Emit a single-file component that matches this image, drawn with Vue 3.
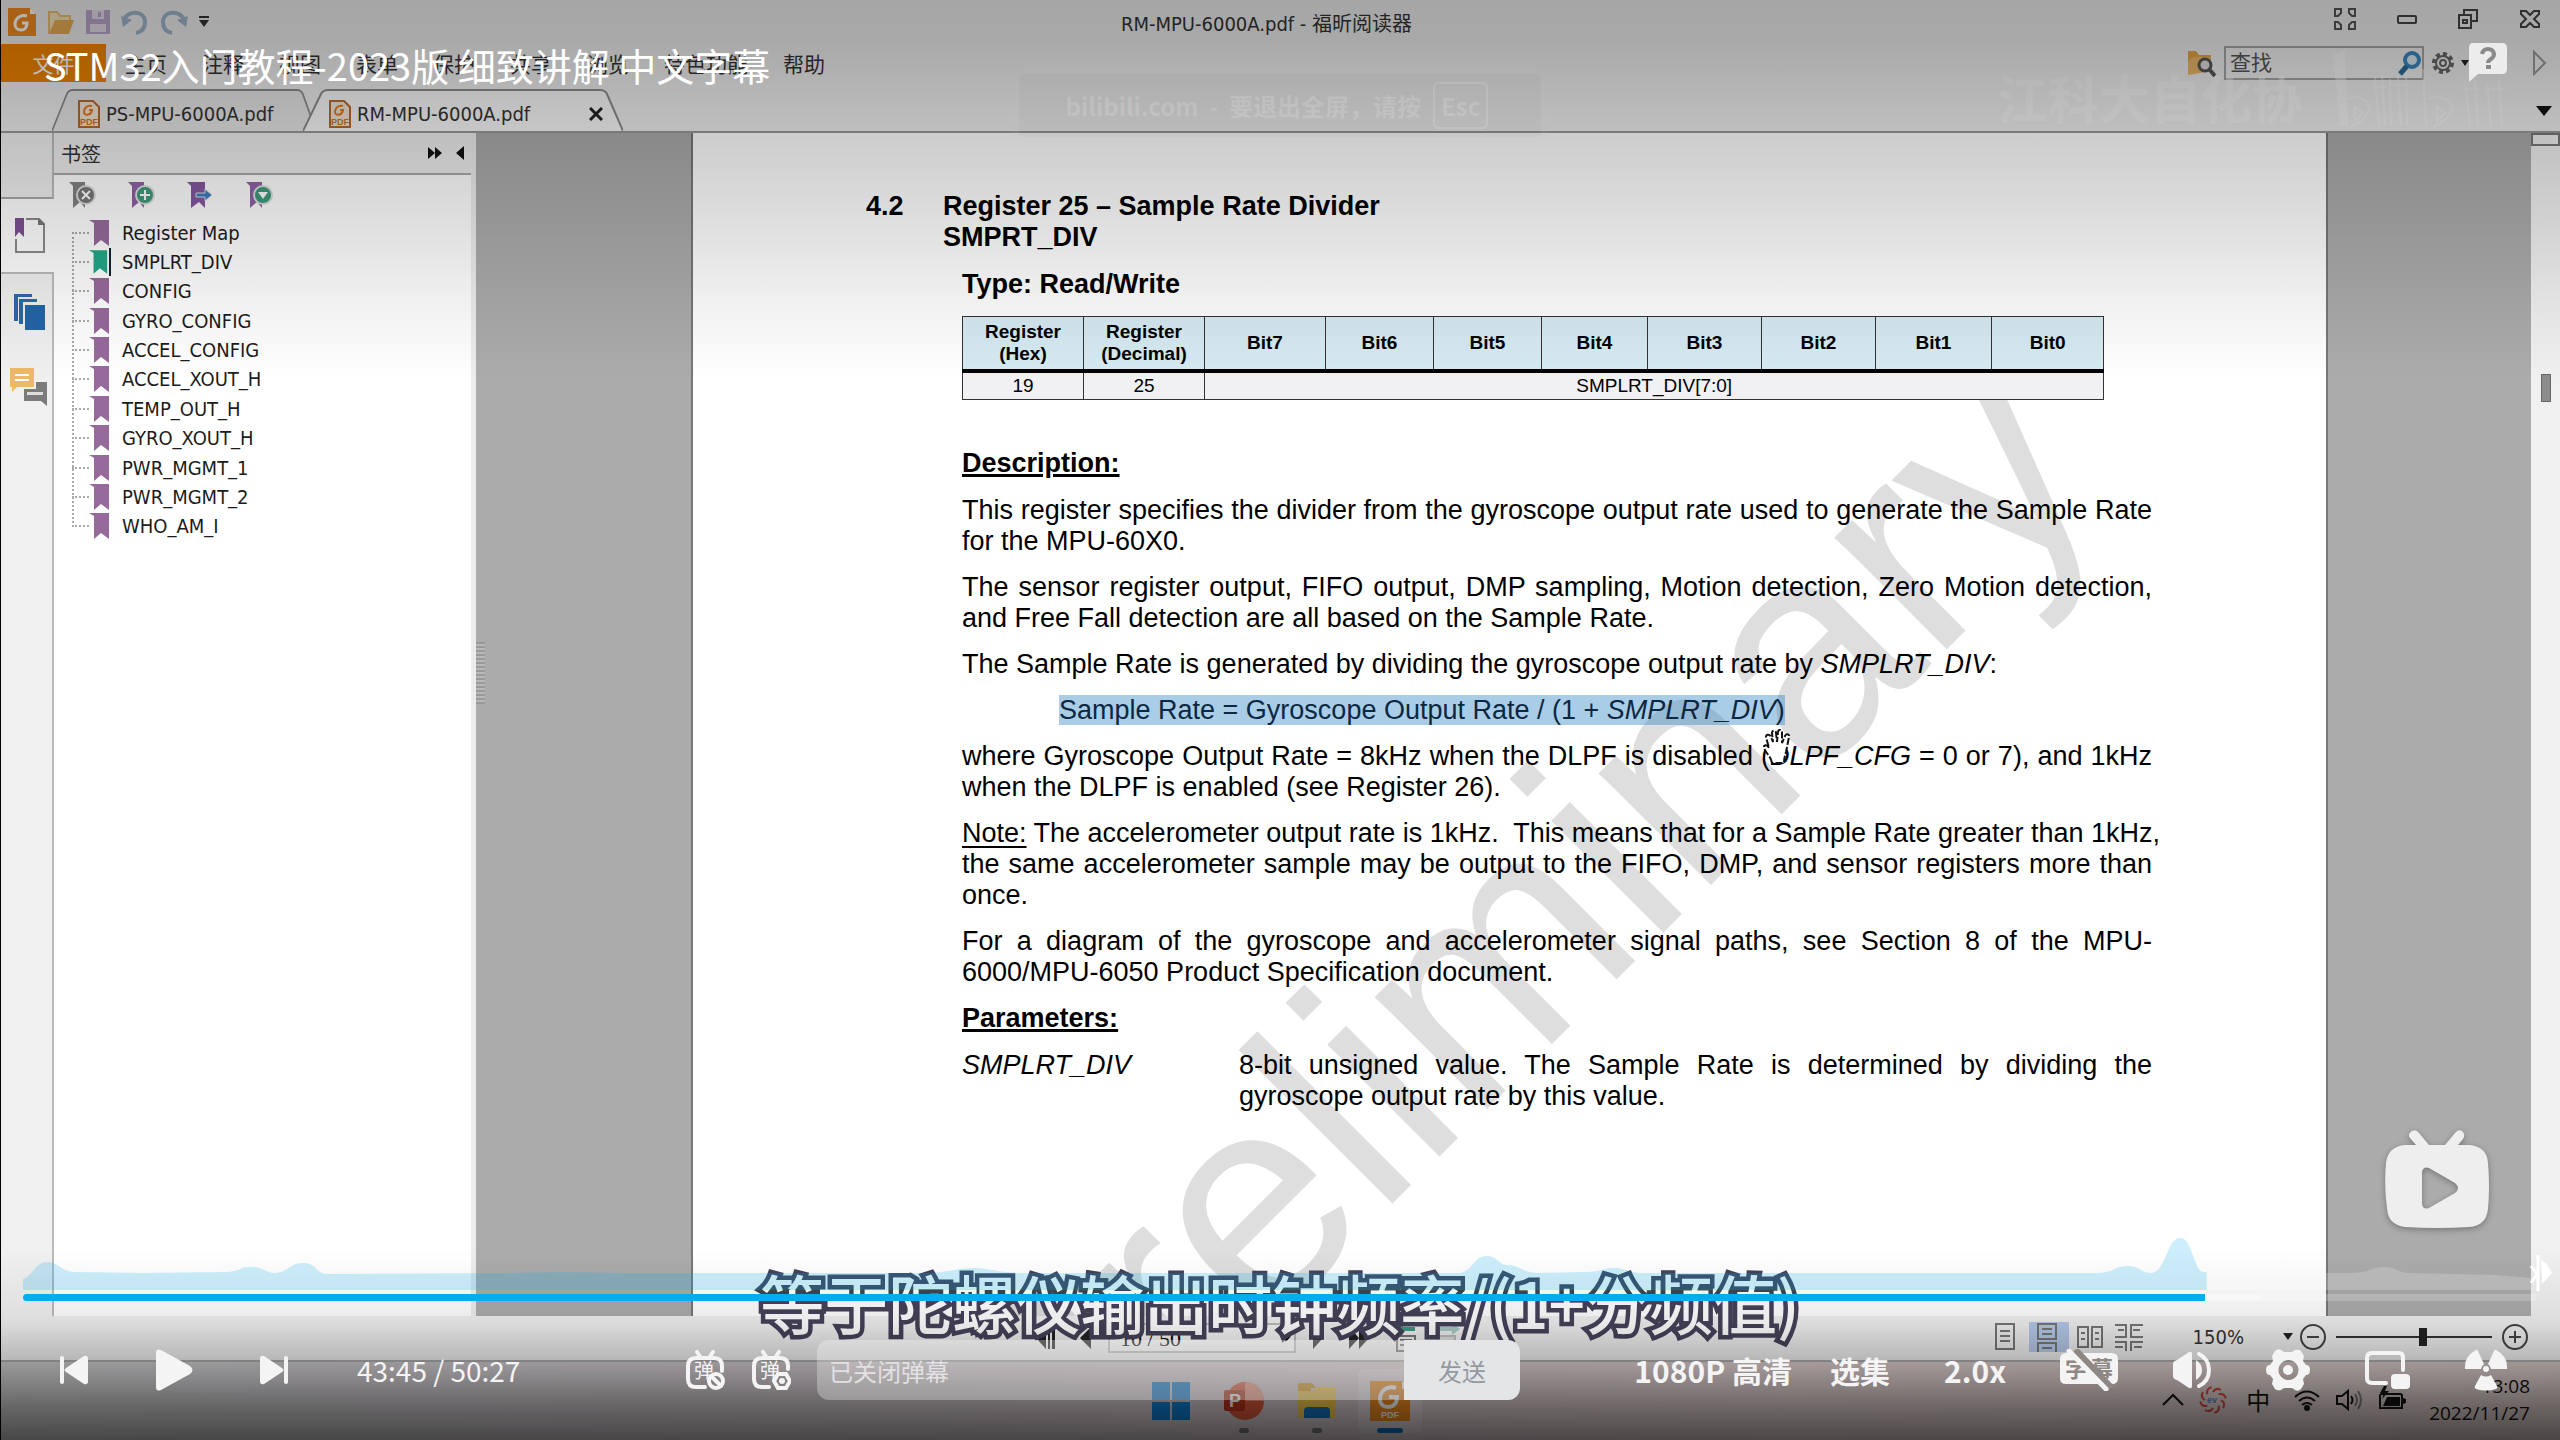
<script setup>
import { ref } from 'vue';

const menus = ['主页', '注释', '视图', '表单', '保护', '共享', '浏览', '特色功能', '帮助'];
const tabs = [
  { name: 'PS-MPU-6000A.pdf', active: false },
  { name: 'RM-MPU-6000A.pdf', active: true },
];
const bookmarks = [
  'Register Map', 'SMPLRT_DIV', 'CONFIG', 'GYRO_CONFIG', 'ACCEL_CONFIG', 'ACCEL_XOUT_H',
  'TEMP_OUT_H', 'GYRO_XOUT_H', 'PWR_MGMT_1', 'PWR_MGMT_2', 'WHO_AM_I',
];
const current = ref('SMPLRT_DIV');
const bits = ['Bit7', 'Bit6', 'Bit5', 'Bit4', 'Bit3', 'Bit2', 'Bit1', 'Bit0'];
const keyword = ref('');
const danmaku = ref('');
const zoom = ref(56);
const progress = ref(868);
</script>

<template>
  <div class="player">
    <!-- recorded desktop -->
    <div class="desktop">
      <header class="titlebar">
        <div class="quick">
          <svg width="28" height="28" viewBox="0 0 28 28"><path d="M0 0h22l6 6v22H0z" fill="#f08a20" /><path d="M22 0v6h6z" fill="#fff" /><path d="M19 8c-7-2-12 3-12 8 0 4 3 6 6 6 4 0 6-3 6-7h-5" fill="none" stroke="#fff" stroke-width="3" /></svg>
          <svg width="28" height="28" viewBox="0 0 28 28"><path d="M2 26V4h8l3 4h10v4" fill="#f6e3b8" stroke="#e9bd72" stroke-width="2" /><path d="M2 26L8 12h19l-5 14z" fill="#e6ad55" /></svg>
          <svg width="24" height="28" viewBox="0 0 24 28"><path d="M0 2h24v24H0z" fill="#b9a5c9" /><path d="M6 2h12v9H6zM4 16h16v8H4z" fill="#e3dce8" /><path d="M12 4h3v5h-3z" fill="#b9a5c9" /></svg>
          <svg width="28" height="28" viewBox="0 0 28 28"><path d="M3 12C6 2 24 2 24 14c0 6-3 10-9 11" fill="none" stroke="#9db4cc" stroke-width="4" /><path d="M0 8l2 11 9-7z" fill="#9db4cc" /></svg>
          <svg width="28" height="28" viewBox="0 0 28 28"><path d="M24 12C21 2 3 2 3 14c0 6 3 10 9 11" fill="none" stroke="#9db4cc" stroke-width="4" /><path d="M28 8l-2 11-9-7z" fill="#9db4cc" /></svg>
          <svg width="10" height="12" viewBox="0 0 10 12"><path d="M0 0h10v2H0zM0 4h10L5 11z" fill="#333" /></svg>
        </div>
        <h1>RM-MPU-6000A.pdf - 福昕阅读器</h1>
        <div class="window-buttons">
          <button aria-label="皮肤"><svg width="24" height="24" viewBox="0 0 24 24"><path d="M2 9V2h6v4l-3 3zM16 2h6v7h-3l-3-3zM2 15h3l3 3v4H2zM22 15v7h-6v-4l3-3z" fill="none" stroke="#555" stroke-width="2" /></svg></button>
          <button aria-label="最小化"><svg width="20" height="24" viewBox="0 0 20 24"><rect x="1" y="9" width="18" height="7" rx="1" fill="none" stroke="#444" stroke-width="2" /></svg></button>
          <button aria-label="还原"><svg width="22" height="24" viewBox="0 0 22 24"><path d="M7 8V3h13v11h-5M2 8h12v13H2zM6 13h4v3H6z" fill="none" stroke="#444" stroke-width="2" /></svg></button>
          <button aria-label="关闭"><svg width="22" height="24" viewBox="0 0 22 24"><path d="M2 4h5l4 4 4-4h5v3l-5 5 5 5v3h-5l-4-4-4 4H2v-3l5-5-5-5z" fill="none" stroke="#444" stroke-width="2" /></svg></button>
        </div>
      </header>

      <nav class="menubar">
        <button class="file">文件</button>
        <button v-for="m in menus" :key="m">{{ m }}</button>
        <div class="find">
          <svg width="30" height="28" viewBox="0 0 30 28"><path d="M1 26V2h8l3 4h12v5" fill="#e0a347" /><path d="M1 26V12l6-4h17v14z" fill="#e9b565" /><circle cx="18" cy="16" r="6" fill="#ddd" stroke="#555" stroke-width="3" /><path d="M22 20l6 7" stroke="#555" stroke-width="4" /></svg>
          <div class="find-box">
            <input v-model="keyword" type="text" placeholder="查找" aria-label="查找">
            <svg width="24" height="26" viewBox="0 0 24 26"><circle cx="14" cy="10" r="7" fill="#d6e8f3" stroke="#3b87bd" stroke-width="4" /><path d="M9 16l-7 8" stroke="#2b6a9c" stroke-width="5" /></svg>
          </div>
          <svg width="38" height="26" viewBox="0 0 38 26"><circle cx="12" cy="13" r="9" fill="none" stroke="#666" stroke-width="4" stroke-dasharray="4 3" /><circle cx="12" cy="13" r="7" fill="none" stroke="#666" stroke-width="2" /><circle cx="12" cy="13" r="3" fill="none" stroke="#666" stroke-width="2" /><path d="M30 10h8l-4 6z" fill="#222" /></svg>
          <svg class="next-arrow" width="16" height="26" viewBox="0 0 16 26"><path d="M2 2l11 11L2 24z" fill="none" stroke="#999" stroke-width="2" /></svg>
        </div>
      </nav>

      <div class="tabs">
        <button v-for="t in tabs" :key="t.name" class="tab" :class="{ active: t.active }">
          <svg class="tab-shape" viewBox="0 0 320 42" preserveAspectRatio="none"><path d="M0 42L18 5Q20 1 25 1H297Q302 1 304 5L320 42" stroke="#8c8c8c" stroke-width="2" /></svg>
          <svg width="22" height="28" viewBox="0 0 22 28"><path d="M1 1h14l6 6v20H1z" fill="#f3e4d4" stroke="#b56a2e" stroke-width="2" /><path d="M14 6c-6-1-8 3-8 6 0 4 7 4 8-2h-3" fill="none" stroke="#e07a20" stroke-width="2" /><text x="2" y="25" font-size="9" font-weight="bold" fill="#c8742c" font-family="Liberation Sans">PDF</text></svg>
          <span>{{ t.name }}</span>
          <svg v-if="t.active" class="tab-close" width="14" height="14" viewBox="0 0 14 14"><path d="M1 1l12 12M13 1L1 13" stroke="#222" stroke-width="3" /></svg>
        </button>
        <svg class="tab-more" width="16" height="10" viewBox="0 0 16 10"><path d="M0 0h16L8 10z" fill="#111" /></svg>
      </div>

      <div class="body">
        <aside class="strip">
          <div class="strip-head"></div>
          <button class="on" aria-label="书签">
            <svg width="32" height="38" viewBox="0 0 32 38"><path d="M12 2h13l5 5v28H2V22" fill="none" stroke="#8a8a8a" stroke-width="2" /><path d="M24 1v7h7z" fill="#777" /><path d="M1 1h9v19l-5-5-4 5z" fill="#7d4f94" /></svg>
          </button>
          <button aria-label="页面">
            <svg width="32" height="38" viewBox="0 0 32 38"><path d="M1 1h18v3H5v24H1zM6 6h18v3H10v22H6z" fill="#2a6aad" /><path d="M12 12h20v25H12z" fill="#2465a8" /></svg>
          </button>
          <button aria-label="注释">
            <svg width="40" height="40" viewBox="0 0 40 40"><path d="M1 1h24v19H8l-5 5v-5H1z" fill="#efb768" /><path d="M6 8h14M6 13h14" stroke="#fff" stroke-width="2" /><path d="M27 15h11v24l-6-5H15V22h12z" fill="#7b7b7b" /><path d="M18 25h16v3H18z" fill="#ddd" /></svg>
          </button>
        </aside>

        <section class="panel">
          <div class="panel-head">
            <h2>书签</h2>
            <svg width="40" height="16" viewBox="0 0 40 16"><path d="M1 2l7 6-7 6zM8 2l7 6-7 6zM37 1v14l-8-7z" fill="#111" /></svg>
          </div>
          <div class="panel-body">
            <div class="panel-tools">
              <button aria-label="删除书签"><svg width="28" height="28" viewBox="0 0 28 28"><path d="M1 1h16v26l-5-6-7 6V5z" fill="#828282" /><circle cx="18" cy="14" r="9" fill="#777" stroke="#ddd" stroke-width="2" /><path d="M14 10l8 8M22 10l-8 8" stroke="#fff" stroke-width="2" /></svg></button>
              <button aria-label="新建书签"><svg width="28" height="28" viewBox="0 0 28 28"><path d="M1 1h16v26l-5-6-7 6V5z" fill="#8f62a6" /><circle cx="18" cy="14" r="9" fill="#3f9a7b" stroke="#ddd" stroke-width="2" /><path d="M13 14h10M18 9v10" stroke="#fff" stroke-width="2" /></svg></button>
              <button aria-label="转到书签"><svg width="28" height="28" viewBox="0 0 28 28"><path d="M1 1h18v26l-6-6-8 6V5z" fill="#8458a0" /><path d="M10 12h9V8l7 6-7 6v-4h-9z" fill="#3a7cc0" stroke="#ddd" stroke-width="1" /></svg></button>
              <button aria-label="展开书签"><svg width="28" height="28" viewBox="0 0 28 28"><path d="M1 1h16v26l-5-6-7 6V5z" fill="#8f62a6" /><circle cx="18" cy="14" r="9" fill="#3f9a7b" stroke="#ddd" stroke-width="2" /><path d="M13 11h10l-5 7z" fill="#fff" /></svg></button>
            </div>
            <ul class="tree">
              <li v-for="b in bookmarks" :key="b" :class="{ current: b === current }">
                <a href="#" @click.prevent="current = b">
                  <svg width="22" height="28" viewBox="0 0 22 28"><path d="M0 1h20v26l-8-6-7 6V4z" /></svg>{{ b }}
                </a>
              </li>
            </ul>
          </div>
        </section>

        <div class="gutter"><i class="grip"></i></div>

        <main class="page">
          <svg class="stamp" width="1633" height="1184"><text x="0" y="0" transform="translate(355 1415) rotate(-45)">Preliminary</text></svg>
          <div class="sheet">
            <h3 class="section"><span>4.2</span><span>Register 25 – Sample Rate Divider<br>SMPRT_DIV</span></h3>
            <div class="content">
              <h4>Type: Read/Write</h4>
              <table>
                <colgroup><col v-for="n in 10" :key="n" :class="'c' + n"></colgroup>
                <thead>
                  <tr><th>Register<br>(Hex)</th><th>Register<br>(Decimal)</th><th v-for="b in bits" :key="b">{{ b }}</th></tr>
                </thead>
                <tbody>
                  <tr><td>19</td><td>25</td><td colspan="8">SMPLRT_DIV[7:0]</td></tr>
                </tbody>
              </table>
              <h4 class="under">Description:</h4>
              <p>This register specifies the divider from the gyroscope output rate used to generate the Sample Rate for the MPU-60X0.</p>
              <p>The sensor register output, FIFO output, DMP sampling, Motion detection, Zero Motion detection, and Free Fall detection are all based on the Sample Rate.</p>
              <p>The Sample Rate is generated by dividing the gyroscope output rate by <em>SMPLRT_DIV</em>:</p>
              <p class="formula"><mark>Sample Rate = Gyroscope Output Rate / (1 + <em>SMPLRT_DIV</em>)
                <svg class="hand" width="28" height="36" viewBox="0 0 28 36"><path d="M9 34C8 27 2 24 1 18c0-2 3-3 5 1L3 8c0-3 4-3 5 0l2 5-1-9c0-3 4-3 4 0l1 9 1-10c0-3 4-3 4 0v11l3-7c1-3 5-2 4 1l-3 15c-1 4-2 6-2 11z" fill="#fff" stroke="#111" stroke-width="2" stroke-dasharray="7 2" /></svg></mark></p>
              <p>where Gyroscope Output Rate = 8kHz when the DLPF is disabled (<em>DLPF_CFG</em> = 0 or 7), and 1kHz when the DLPF is enabled (see Register 26).</p>
              <p><span class="keep"><u>Note:</u> The accelerometer output rate is 1kHz.&nbsp; This means that for a Sample Rate greater than 1kHz,</span> the same accelerometer sample may be output to the FIFO, DMP, and sensor registers more than once.</p>
              <p>For a diagram of the gyroscope and accelerometer signal paths, see Section 8 of the MPU-6000/MPU-6050 Product Specification document.</p>
              <h4 class="under">Parameters:</h4>
              <div class="params">
                <em>SMPLRT_DIV</em>
                <p>8-bit unsigned value. The Sample Rate is determined by dividing the gyroscope output rate by this value.</p>
              </div>
            </div>
          </div>
        </main>

        <div class="gutter gutter-end"></div>
        <div class="scroll"><i class="split"></i><i class="thumb"></i></div>
      </div>

      <footer class="status">
        <div class="pager">
          <svg width="20" height="26" viewBox="0 0 20 26"><path d="M10 2v22L0 13zM12 2h2v22h-2zM16 2h3v22h-3z" fill="#222" /></svg>
          <svg width="12" height="26" viewBox="0 0 12 26"><path d="M11 2v22L0 13z" fill="#222" /></svg>
          <select aria-label="页码"><option>10 / 50</option></select>
          <svg width="12" height="26" viewBox="0 0 12 26"><path d="M1 2v22l10-11z" fill="#222" /></svg>
          <svg width="22" height="26" viewBox="0 0 22 26"><path d="M1 2v22l10-11zM11 2v22l10-11z" fill="#222" /></svg>
          <svg width="68" height="32" viewBox="0 0 68 32"><path d="M1 7l8-6v4h12v4H9v4z" fill="#3d9a84" /><path d="M3 14h18v15H3zM6 18h12M6 23h12" fill="#eee" stroke="#777" stroke-width="2" /><path d="M43 14h18v15H43z" fill="#ddd" stroke="#bbb" stroke-width="2" /><path d="M66 7l-8-6v4H46v4h12v4z" fill="#a8c9c4" /></svg>
        </div>
        <div class="views">
          <svg width="22" height="28" viewBox="0 0 22 28"><path d="M1 1h18v25H1zM5 8h10M5 13h10M5 18h10" /></svg>
          <svg class="on" width="40" height="30" viewBox="0 0 40 30"><path d="M9 2h18v15H9zM13 7h10M13 12h10M9 30V21h18v9M13 26h10" /></svg>
          <svg width="26" height="28" viewBox="0 0 26 28"><path d="M1 4h10v20H1zM15 4h10v20H15zM4 10h4M4 16h4M18 10h4M18 16h4" /></svg>
          <svg width="28" height="28" viewBox="0 0 28 28"><path d="M0 2h11v12H0M28 2H16v12h12M3 7h6M18 7h7M0 19h11v9M28 19H16v9M0 24h8M19 24h8" /></svg>
          <span>150%</span>
          <svg class="drop" width="10" height="8" viewBox="0 0 10 8"><path d="M0 0h10L5 7z" /></svg>
          <button aria-label="缩小"><svg width="28" height="28" viewBox="0 0 28 28"><circle cx="14" cy="14" r="12" /><path d="M8 14h12" /></svg></button>
          <input v-model="zoom" type="range" aria-label="缩放">
          <button aria-label="放大"><svg width="28" height="28" viewBox="0 0 28 28"><circle cx="14" cy="14" r="12" /><path d="M8 14h12M14 8v12" /></svg></button>
        </div>
      </footer>

      <footer class="taskbar">
        <div class="apps">
          <button aria-label="开始"><svg width="40" height="40" viewBox="0 0 40 40"><path d="M1 1h18v18H1zM21 1h18v18H21zM1 21h18v18H1zM21 21h18v18H21z" fill="#0f7fd6" /></svg></button>
          <button aria-label="PowerPoint"><svg width="40" height="40" viewBox="0 0 40 40"><circle cx="21" cy="20" r="19" fill="#d9573a" /><path d="M21 1a19 19 0 0 1 19 19H21z" fill="#f0937c" /><rect y="9" width="21" height="21" rx="2" fill="#b5341a" /><text x="5" y="26" font-size="18" font-weight="bold" fill="#fff" font-family="Liberation Sans">P</text></svg><i></i></button>
          <button aria-label="文件夹"><svg width="40" height="40" viewBox="0 0 40 40"><path d="M1 4q0-2 2-2h12l4 5h-5v6H1z" fill="#d89a1c" /><path d="M1 10h15l4-4h19v31H1z" fill="#f5c944" /><path d="M7 37v-7q0-4 4-4h18q4 0 4 4v7z" fill="#1673bd" /></svg><i></i></button>
          <button class="on" aria-label="福昕阅读器"><svg width="40" height="40" viewBox="0 0 40 40"><path d="M0 0h32l8 8v32H0z" fill="#f08a20" /><path d="M32 0v8h8z" fill="#fff" /><path d="M26 7C16 4 10 11 10 18c0 5 3 8 8 8 6 0 9-4 9-10h-8" fill="none" stroke="#fff" stroke-width="4" /><text x="11" y="37" font-size="9" font-weight="bold" fill="#fff" font-family="Liberation Sans">PDF</text></svg><i></i></button>
        </div>
        <div class="tray">
          <svg width="24" height="28" viewBox="0 0 24 28"><path d="M2 19L12 9l10 10" fill="none" stroke="#111" stroke-width="2" /></svg>
          <svg width="28" height="28" viewBox="0 0 28 28"><g fill="none" stroke="#d0453e" stroke-width="2"><path v-for="n in 8" :key="n" d="M14 6Q17 1 22 4" :transform="`rotate(${n * 45} 14 14)`" /></g><text x="8" y="17" font-size="9" font-weight="bold" fill="#5b7fb5" font-family="Liberation Sans">ev</text></svg>
          <span class="ime">中</span>
          <svg width="28" height="28" viewBox="0 0 28 28"><g fill="none" stroke="#111" stroke-width="2"><path d="M2 11q12-11 24 0M6 15q8-7 16 0M9 19q5-4 10 0" /></g><circle cx="14" cy="22" r="3" fill="#111" /></svg>
          <svg width="28" height="28" viewBox="0 0 28 28"><g fill="none" stroke="#111" stroke-width="2"><path d="M2 10h5l6-5v18l-6-5H2z" /><path d="M16 10q3 4 0 8" /><path d="M20 8q4 6 0 12M23 5q6 9 0 18" stroke="#777" /></g></svg>
          <svg width="30" height="28" viewBox="0 0 30 28"><path d="M3 10q0-2 2-2h18q2 0 2 2v12H3z" fill="none" stroke="#111" stroke-width="2" /><path d="M6 20l4-9h13v9zM26 12l3 1v4l-3 1zM7 0L3 7h4l-2 6 7-8H8l2-5z" fill="#111" /></svg>
          <time>13:08<br>2022/11/27</time>
        </div>
      </footer>
    </div>

    <!-- burned-in subtitle and uploader mark -->
    <div class="uploader">
      <span>江科大自化协</span>
      <svg width="190" height="84" viewBox="0 0 190 84"><path d="M8 6l12-5 3 76h-8z" fill="#fff" /><g fill="none" stroke="#fff" stroke-width="2"><path d="M23 50q14-6 22 8-4 14-20 20M30 58v14l8-8zM50 28l4 48M57 26l3 50M65 30l1 46M73 28l3 48M81 24l1 52M98 20l3 58M104 50q16-6 24 8-4 14-20 20M112 58v14l8-8zM140 32l5 44M150 30l3 48M162 34l4 42M174 30l3 46M48 38h14M66 36h18M138 40h16M160 40h20" /></g></svg>
    </div>
    <p class="subtitle">等于陀螺仪输出时钟频率/(1+分频值)</p>

    <!-- player chrome over the video -->
    <div class="chrome">
      <h2 class="video-title">STM32入门教程-2023版 细致讲解 中文字幕</h2>
      <div class="toast">bilibili.com &nbsp;- &nbsp;<span>要退出全屏，请按</span><kbd>Esc</kbd></div>
      <button class="help" aria-label="帮助"><svg width="40" height="40" viewBox="0 0 40 40"><path d="M5 0h29q5 0 5 5v21q0 5-5 5H10L1 39V5q0-5 4-5z" fill="#ececec" /><path d="M14 11q1-5 6-5t6 5q0 3-3 5t-3 4" fill="none" stroke="#8a8a8a" stroke-width="4" /><path d="M18 22h5v4h-5z" fill="#8a8a8a" /></svg></button>

      <svg class="tv" width="106" height="100" viewBox="0 0 106 100"><path fill-rule="evenodd" d="M28 1q4-2 7 2l10 12h16L71 3q3-4 7-2 4 3 1 8l-5 6h12q17 2 18 18 2 24 0 46-2 17-19 18-32 2-64 0Q4 95 3 78 0 56 2 33 4 17 20 15h12l-6-7q-3-4 2-7zM38 42v32q1 6 7 4l26-15q6-5 0-10L45 38q-6-2-7 4z" fill="#eee" /></svg>

      <div class="bottom">
        <svg class="heat" viewBox="0 0 2512 60" preserveAspectRatio="none">
          <path d="M0 60V49C10 46 12 32 24 32S38 42 52 42L120 43 205 42C220 40 216 37 228 37S242 43 252 43C266 42 266 33 280 33S292 44 305 44L480 43 540 42 600 43H900C930 42 934 38 949 38S970 42 1000 43H1435C1448 42 1450 26 1462 26S1474 35 1484 35 1500 43 1514 43L1560 42C1576 42 1578 38 1590 38S1604 43 1620 43H2075C2090 42 2090 36 2103 36S2116 43 2126 43C2142 42 2142 8 2155 8S2168 38 2178 42H2182V60z" fill="#00aeec" fill-opacity=".2" />
          <path d="M2182 60V43H2330C2346 42 2346 37 2359 37S2372 43 2385 43L2470 45 2506 48V60z" fill="#fff" fill-opacity=".2" />
        </svg>
        <input v-model="progress" class="progress" type="range" max="1000" aria-label="播放进度">
        <svg class="playhead" width="24" height="38" viewBox="0 0 24 38"><path d="M8 1v36M1 12l6 8-6 9" fill="none" stroke="#fff" stroke-width="3" /><path d="M11 6q6 2 11 13l-10 11z" fill="#fff" /></svg>

        <div class="controls">
          <div class="transport">
            <button aria-label="上一个"><svg width="30" height="30" viewBox="0 0 30 30"><path d="M1 3q0-2 2-2t2 2v24q0 2-2 2t-2-2zM7 13L25 1q4-1 4 3v22q0 4-4 3L7 17q-3-2 0-4z" /></svg></button>
            <button aria-label="播放"><svg width="38" height="42" viewBox="0 0 38 42"><path d="M1 4q0-5 5-3l29 16q5 4 0 8L6 41q-5 2-5-3z" /></svg></button>
            <button aria-label="下一个"><svg width="30" height="30" viewBox="0 0 30 30"><path d="M29 3q0-2-2-2t-2 2v24q0 2 2 2t2-2zM23 13L5 1Q1 0 1 4v22q0 4 4 3l18-12q3-2 0-4z" /></svg></button>
            <span class="time">43:45 / 50:27</span>
          </div>
          <div class="danmaku">
            <button aria-label="关闭弹幕"><svg width="40" height="40" viewBox="0 0 40 40"><path d="M12 2l4 6M28 2l-4 6M20 37H11q-8 0-8-8V16q0-8 8-8h18q8 0 8 8v5" class="line" /><text x="9" y="28" font-size="20">弹</text><circle cx="31" cy="31" r="7" class="line" /><path d="M26 26l10 10" class="line" /></svg></button>
            <button aria-label="弹幕设置"><svg width="40" height="40" viewBox="0 0 40 40"><path d="M12 2l4 6M28 2l-4 6M18 37H11q-8 0-8-8V16q0-8 8-8h18q8 0 8 8v3" class="line" /><text x="9" y="28" font-size="20">弹</text><path d="M27 24h8l4 7-4 7h-8l-4-7z" class="line" /><circle cx="31" cy="31" r="3" /></svg></button>
            <div class="send">
              <input v-model="danmaku" type="text" placeholder="已关闭弹幕" aria-label="弹幕">
              <button>发送</button>
            </div>
          </div>
          <div class="options">
            <button>1080P 高清</button>
            <button>选集</button>
            <button>2.0x</button>
            <button aria-label="字幕"><svg width="58" height="42" viewBox="0 0 58 42"><path d="M6 4h46q6 0 6 6v19q0 6-6 6H6q-6 0-6-6V10q0-6 6-6z" /><text x="5" y="28" font-size="22" class="cut">字</text><text x="31" y="28" font-size="22" class="cut">幕</text><path d="M14 2l36 38" stroke="#8f8784" stroke-width="10" /><path d="M9 2l37 38" stroke="#f4f4f4" stroke-width="5" stroke-linecap="round" /></svg></button>
            <button aria-label="音量"><svg width="40" height="40" viewBox="0 0 40 40"><path d="M1 14q0-3 4-4l12-8q3-1 3 2v32q0 3-3 2L5 30q-4-1-4-4zM24 10q6 4 6 10t-6 10z" /><path d="M27 4q10 5 10 16T27 36" class="line" /></svg></button>
            <button aria-label="设置"><svg width="44" height="42" viewBox="0 0 44 42"><path fill-rule="evenodd" d="M9 2q3-3 6-1l3 2h8l3-2q4-1 6 1l3 5-1 5 3 4q4 0 4 5t-4 5l-3 4 1 5-3 5q-3 3-6 1l-3-2h-8l-3 2q-4 1-6-1l-3-5 1-5-3-4q-4 0-4-5t4-5l3-4-1-5zM22 11a10 10 0 1 0 1 0z" /><circle cx="22" cy="21" r="5" /></svg></button>
            <button aria-label="画中画"><svg width="46" height="40" viewBox="0 0 46 40"><path d="M22 33H8q-5 0-5-5V8q0-5 5-5h27q4 0 4 5v12" class="line" /><rect x="27" y="24" width="19" height="15" rx="4" /></svg></button>
            <button aria-label="全屏"><svg width="44" height="42" viewBox="0 0 44 42"><path d="M12 1q1-1 2 1l6 13q-3 2-3 5H1Q0 7 12 1zM32 1q-1-1-2 1l-6 13q3 2 3 5h16q1-13-11-19zM17 26q5 3 10 0l6 11q1 2-1 3-10 3-20 0-2-1-1-3z" /><circle cx="22" cy="20" r="3" /></svg></button>
          </div>
        </div>
      </div>
    </div>
  </div>
</template>

<style>
body {
  margin: 0;
  background: #000;
}
</style>

<style scoped>
.player {
  position: relative;
  overflow: hidden;
  font-family: "Noto Sans", "Noto Sans CJK SC", sans-serif;
}

.player * {
  box-sizing: border-box;
}

.player svg {
  display: block;
  flex: none;
}

button {
  padding: 0;
  border: 0;
  background: none;
  font: inherit;
  color: inherit;
}

h1, h2, h3, h4, p, ul {
  margin: 0;
  padding: 0;
  font-weight: normal;
}

.desktop {
  display: flex;
  flex-direction: column;
  min-height: 100vh;
  border-left: 1px solid #000;
  background: #eee;
  font-family: "DejaVu Sans Condensed", "Noto Sans CJK SC", sans-serif;
  font-size: 20px;
  color: #333;
}

/* title bar, menu, tabs */
.titlebar {
  display: grid;
  grid-template-columns: 1fr auto 1fr;
  align-items: center;
  height: 44px;
  padding: 0 19px 0 7px;
}

.titlebar h1 {
  margin-right: 16px;
  font-size: 20px;
}

.quick {
  display: flex;
  align-items: center;
  gap: 11px;
}

.window-buttons {
  display: flex;
  justify-content: flex-end;
  gap: 40px;
  padding-bottom: 6px;
}

.menubar {
  display: flex;
  align-items: center;
  gap: 35px;
  height: 38px;
  font-size: 21px;
  padding-right: 12px;
}

.menubar .file {
  width: 105px;
  height: 38px;
  margin-right: -16px;
  background: #f08300;
  color: #fff;
}

.find {
  display: flex;
  align-items: center;
  gap: 7px;
  margin-left: auto;
}

.find-box {
  display: flex;
  align-items: center;
  width: 200px;
  height: 34px;
  border: 2px solid #a5a5a5;
  background: #f0f0f0;
}

.find-box input {
  flex: 1;
  min-width: 0;
  padding: 0 4px;
  border: 0;
  background: none;
  font: inherit;
}

.find-box input::placeholder {
  color: #555;
}

.next-arrow {
  margin-left: 56px;
}

.tabs {
  display: flex;
  align-items: flex-end;
  height: 51px;
  padding-left: 51px;
  border-bottom: 2px solid #989898;
}

.tab {
  position: relative;
  display: flex;
  align-items: center;
  gap: 6px;
  width: 264px;
  height: 42px;
  padding: 7px 20px 0 26px;
}

.tab.active {
  width: 320px;
  margin-left: -13px;
}

.tab-shape {
  position: absolute;
  inset: 0;
  width: 100%;
  height: 100%;
  fill: #e6e6e6;
}

.active .tab-shape {
  fill: #f8f8f8;
}

.tab > *:not(.tab-shape) {
  position: relative;
}

.tab-close {
  margin-left: auto;
}

.tab-more {
  margin: 0 8px 15px auto;
}

/* reader body */
.body {
  flex: 1;
  display: grid;
  grid-template-columns: 53px 422px 217px minmax(0, 1fr) 205px 29px;
}

.strip {
  display: flex;
  flex-direction: column;
  background: #f0f0f0;
  border-right: 2px solid #bbb;
}

.strip-head {
  height: 66px;
  border-bottom: 2px solid #a8a8a8;
}

.strip button {
  display: grid;
  place-items: center;
  height: 75px;
  padding-left: 4px;
}

.strip .on {
  width: 53px;
  background: #fff;
  border-bottom: 2px solid #bbb;
}

.panel {
  display: flex;
  flex-direction: column;
  border-right: 5px solid #ededed;
}

.panel-head {
  display: flex;
  align-items: center;
  justify-content: space-between;
  height: 40px;
  padding: 0 4px 0 7px;
}

.panel-head h2 {
  font-size: 20px;
}

.panel-body {
  flex: 1;
  border-top: 2px solid #aaa;
  background: #fff;
}

.panel-tools {
  display: flex;
  align-items: flex-start;
  gap: 31px;
  padding: 6px 14px 0;
  height: 43px;
}

.tree {
  position: relative;
  display: grid;
  grid-auto-rows: 1fr;
  height: 323px;
  margin-left: 18px;
  list-style: none;
}

.tree::before {
  content: "";
  position: absolute;
  top: 14px;
  bottom: 14px;
  left: 0;
  border-left: 2px dotted #aaa;
}

.tree li {
  display: flex;
  align-items: center;
}

.tree li::before {
  content: "";
  width: 17px;
  border-top: 2px dotted #aaa;
}

.tree a {
  display: flex;
  align-items: center;
  gap: 11px;
  color: #1c1c1c;
  text-decoration: none;
}

.tree svg {
  fill: #976a9c;
}

.tree .current svg {
  fill: #22a888;
  border-right: 2px solid #123;
}

.gutter {
  display: flex;
  align-items: center;
  background: #ababab;
  border-right: 2px solid #777;
}

.gutter-end {
  border-right: 0;
  border-left: 2px solid #777;
}

.grip {
  width: 9px;
  height: 62px;
  margin-bottom: 104px;
  background: repeating-linear-gradient(#999 0 2px, #b8b8b8 2px 4px);
}

.scroll {
  display: flex;
  flex-direction: column;
  align-items: center;
  background: #f0f0f0;
}

.split {
  width: 100%;
  height: 13px;
  border: 2px solid #777;
}

.thumb {
  width: 10px;
  height: 28px;
  margin-top: 228px;
  background: #8c8c8c;
  border: 1px solid #666;
}

/* pdf page */
.page {
  position: relative;
  overflow: hidden;
  background: #fff;
  color: #000;
  font: 27px/31px "Liberation Sans", Arial, sans-serif;
}

.stamp {
  position: absolute;
  top: 0;
  left: 0;
}

.stamp text {
  font-size: 300px;
  fill: #dedede;
}

.sheet {
  position: relative;
  padding: 58px 174px 0 173px;
}

.section {
  display: grid;
  grid-template-columns: 77px 1fr;
  font-size: 27px;
  font-weight: bold;
}

.content {
  margin: 16px 0 0 96px;
}

h4 {
  margin-bottom: 16px;
  font-size: 27px;
  font-weight: bold;
}

.under {
  text-decoration: underline;
  text-decoration-thickness: 3px;
}

.content p {
  margin-bottom: 15px;
  text-align: justify;
}

.content .formula {
  padding-left: 97px;
}

.keep {
  white-space: nowrap;
}

mark {
  position: relative;
  background: rgba(40, 130, 195, .4);
  color: #0c2742;
}

.hand {
  position: absolute;
  top: 34px;
  left: calc(100% - 22px);
}

u {
  text-underline-offset: 4px;
}

.params {
  display: grid;
  grid-template-columns: 277px 1fr;
}

table {
  width: 96%;
  margin-bottom: 48px;
  border-collapse: collapse;
  table-layout: fixed;
  font-size: 19px;
  line-height: 22px;
  text-align: center;
}

th, td {
  padding: 0;
  border: 1px solid #333;
}

th {
  height: 54px;
  background: #d6eaf2;
  border-bottom: 4px solid #000;
}

td {
  height: 29px;
  background: #f1f0f2;
}

.c1, .c2, .c3 { width: 121px; }
.c4, .c5 { width: 108px; }
.c6 { width: 106px; }
.c7, .c8 { width: 114px; }
.c9 { width: 116px; }

/* reader status bar */
.status {
  display: flex;
  align-items: center;
  justify-content: space-between;
  height: 44px;
  padding: 0 34px 0 1035px;
  background: #efefef;
}

.pager {
  display: flex;
  align-items: center;
  gap: 24px;
}

.pager select {
  width: 188px;
  height: 30px;
  margin: 0 -8px;
  padding: 0 6px;
  border: 2px solid #bbb;
  background: #f6f6f6;
  font: 22px "Liberation Serif", serif;
}

.views {
  display: flex;
  align-items: center;
  gap: 12px;
  padding-bottom: 2px;
}

.views svg {
  fill: none;
  stroke: #777;
  stroke-width: 2;
}

.views .on {
  background: #b4c8e8;
}

.views svg:nth-of-type(3) {
  margin-left: -4px;
}

.views span {
  margin: 0 27px 0 38px;
}

.views .drop {
  fill: #222;
  stroke: none;
  margin-right: -3px;
}

.views button {
  margin: 0 -3px;
}

.views button svg {
  stroke: #444;
}

.views input {
  appearance: none;
  width: 156px;
  height: 20px;
  margin: 0;
  background: linear-gradient(#333, #333) center / 100% 2px no-repeat;
}

.views input::-webkit-slider-thumb {
  appearance: none;
  width: 8px;
  height: 18px;
  background: #222;
}

/* windows taskbar */
.taskbar {
  display: flex;
  justify-content: space-between;
  height: 80px;
  padding: 0 30px 0 1138px;
  border-top: 2px solid #aaa;
  background: linear-gradient(90deg, #cbcbcd, #cdc5ca 35%, #dccccc 70%, #d3c6c4);
}

.apps {
  display: flex;
  align-items: center;
  gap: 9px;
}

.apps button {
  display: flex;
  flex-direction: column;
  align-items: center;
  width: 64px;
  height: 64px;
  padding-top: 12px;
  border-radius: 6px;
}

.apps i {
  width: 10px;
  height: 5px;
  margin-top: 7px;
  border-radius: 3px;
  background: #777;
}

.apps .on {
  background: rgba(255, 255, 255, .25);
}

.apps .on i {
  width: 26px;
  background: #0f6fc0;
}

.tray {
  display: flex;
  align-items: center;
  gap: 14px;
  padding-bottom: 3px;
  color: #111;
}

.ime {
  margin: 0 9px 0 5px;
  font-size: 24px;
}

.tray time {
  margin-left: 8px;
  font: 19px/27px "Open Sans", sans-serif;
  text-align: right;
}

/* burned-in marks */
.uploader {
  position: absolute;
  top: 49px;
  right: 45px;
  display: flex;
  gap: 22px;
  opacity: .4;
  color: #fff;
  font-size: 51px;
  font-weight: bold;
  line-height: 100px;
}

.subtitle {
  position: absolute;
  right: 0;
  bottom: 101px;
  left: 0;
  color: #fff;
  font: 500 64px/76px "Noto Sans CJK SC", sans-serif;
  text-align: center;
  -webkit-text-stroke: 9px #454259;
  paint-order: stroke fill;
}

/* player chrome */
.chrome {
  position: absolute;
  inset: 0;
  display: flex;
  flex-direction: column;
  color: #f4f4f4;
  font-family: "Noto Sans CJK SC", sans-serif;
  background:
    linear-gradient(rgba(0, 0, 0, .3), rgba(0, 0, 0, .29) 40px, rgba(0, 0, 0, .2) 132px, rgba(0, 0, 0, .13) 220px, rgba(0, 0, 0, .06) 300px, transparent 380px),
    linear-gradient(0deg, rgba(0, 0, 0, .65), rgba(0, 0, 0, .5) 32px, rgba(0, 0, 0, .25) 76px, rgba(0, 0, 0, .08) 118px, transparent 190px);
}

.video-title {
  padding: 38px 0 0 44px;
  color: #fff;
  font-size: 38px;
  line-height: 54px;
}

.toast {
  position: absolute;
  top: 69px;
  left: 50%;
  display: flex;
  align-items: center;
  justify-content: center;
  width: 532px;
  height: 73px;
  margin-left: -266px;
  padding-right: 6px;
  border: 5px solid rgba(255, 255, 255, .06);
  border-radius: 10px;
  background: rgba(0, 0, 0, .02);
  color: rgba(255, 255, 255, .16);
  font-size: 24px;
  font-weight: bold;
}

.toast kbd {
  margin-left: 12px;
  padding: 4px 6px;
  border: 2px solid rgba(255, 255, 255, .13);
  border-radius: 6px;
  font-family: inherit;
}

.help {
  position: absolute;
  top: 43px;
  right: 52px;
}

.tv {
  margin: auto 70px 0 auto;
  filter: drop-shadow(0 2px 3px rgba(0, 0, 0, .3));
}

.bottom {
  position: relative;
  padding: 0 23px 40px;
}

.heat {
  width: 100%;
  height: 60px;
}

.progress {
  appearance: none;
  display: block;
  width: 100%;
  height: 7px;
  margin: 4px 0 39px;
  border-radius: 4px;
  background: linear-gradient(90deg, #00aeec 86.8%, rgba(255, 255, 255, .4) 86.8% 89%, rgba(255, 255, 255, .2) 89%);
}

.progress::-webkit-slider-thumb {
  appearance: none;
  width: 0;
}

.playhead {
  position: absolute;
  top: 24px;
  right: 6px;
}

.controls {
  display: flex;
  align-items: center;
  padding: 0 29px 0 36px;
}

.controls svg {
  fill: #f4f4f4;
}

.controls .line {
  fill: none;
  stroke: #f4f4f4;
  stroke-width: 4;
  stroke-linecap: round;
}

.controls .cut {
  fill: #8f8784;
  font-weight: bold;
}

.transport {
  display: flex;
  align-items: center;
  gap: 66px;
}

.time {
  padding-left: 2px;
  font-size: 28px;
}

.danmaku {
  display: flex;
  align-items: center;
  gap: 26px;
  margin-left: auto;
  padding-left: 50px;
}

.send {
  display: flex;
  width: 703px;
  height: 60px;
  border-radius: 12px;
  overflow: hidden;
  font-size: 24px;
}

.send input {
  flex: 1;
  min-width: 0;
  padding: 0 12px;
  border: 0;
  background: rgba(255, 255, 255, .3);
  font: inherit;
}

.send input::placeholder {
  color: #e2e0e2;
}

.send button {
  width: 116px;
  background: #e3e5e7;
  color: #9499a0;
}

.options {
  display: flex;
  align-items: center;
  gap: 54px;
  margin-left: auto;
  font-size: 30px;
  font-weight: bold;
}

.options button:first-child {
  margin-right: -16px;
}
</style>
